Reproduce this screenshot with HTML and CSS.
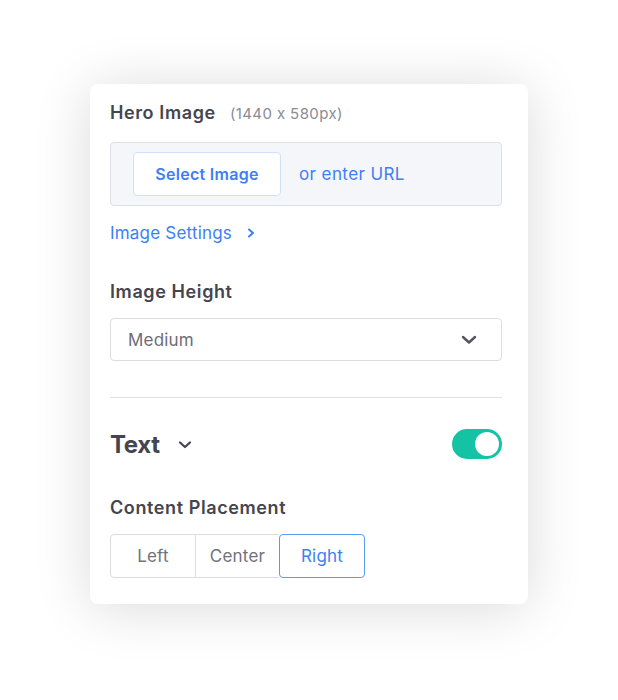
FILE: index.html
```html
<!DOCTYPE html>
<html lang="en">
<head>
    <meta charset="UTF-8">
    <meta name="viewport" content="width=device-width, initial-scale=1.0">
    <title>Hero settings</title>
    <link rel="stylesheet" href="styles.css">
</head>
<body>
<div class="page">
    <div class="panel">
        <div class="field-title">
            Hero Image <span class="hint">(1440 x 580px)</span>
        </div>

        <div class="dropzone">
            <button class="select-btn">Select Image</button>
            <span class="url-link">or enter URL</span>
        </div>

        <a class="settings-link" href="#">
            Image Settings
            <svg width="10" height="12" viewBox="0 0 10 12"><path d="M3 2.5l4 3.5-4 3.5" fill="none" stroke="currentColor" stroke-width="2" stroke-linecap="round" stroke-linejoin="round"/></svg>
        </a>

        <div class="field-title spaced">Image Height</div>
        <div class="dropdown">
            <span>Medium</span>
            <svg width="16" height="10" viewBox="0 0 16 10"><path d="M2 2l6 5.5L14 2" fill="none" stroke="currentColor" stroke-width="2.4" stroke-linecap="round" stroke-linejoin="round"/></svg>
        </div>

        <div class="divider"></div>

        <div class="section-head">
            <div class="section-name">
                Text
                <svg width="14" height="10" viewBox="0 0 14 10"><path d="M2 2.5l5 4.5 5-4.5" fill="none" stroke="currentColor" stroke-width="2.2" stroke-linecap="round" stroke-linejoin="round"/></svg>
            </div>
            <div class="toggle on"><div class="knob"></div></div>
        </div>

        <div class="field-title placement">Content Placement</div>
        <div class="segmented">
            <div class="seg">Left</div>
            <div class="seg">Center</div>
            <div class="seg active">Right</div>
        </div>
    </div>
</div>
</body>
</html>
```

FILE: styles.css
```css
body {
    margin: 0;
    background: #fff;
    font-family: Inter, "Noto Sans", sans-serif;
    font-feature-settings: "calt" 0;
    color: #45454f;
}
.page {
    padding: 84px 0 96px 90px;
}
.panel {
    width: 392px;
    height: 477px;
    padding: 17px 26px 26px 20px;
    background: #fff;
    border-radius: 8px;
    box-shadow: 0 4px 55px rgba(0, 0, 0, 0.15);
}
.field-title {
    font-size: 18px;
    font-weight: 600;
    line-height: 24px;
    letter-spacing: 0.6px;
}
.field-title.spaced {
    margin-top: 35px;
}
.field-title.placement {
    margin-top: 37px;
}
.hint {
    margin-left: 9px;
    font-size: 15px;
    font-weight: 400;
    color: #8b8b95;
    letter-spacing: 0.4px;
}
.dropzone {
    margin-top: 16px;
    box-sizing: border-box;
    height: 64px;
    padding: 9px 22px;
    display: flex;
    align-items: center;
    gap: 18px;
    background: #f4f6fa;
    border: 1px solid #dde0e7;
    border-radius: 4px;
}
.select-btn {
    width: 148px;
    height: 44px;
    background: #fff;
    border: 1px solid #cfe0fb;
    border-radius: 4px;
    font-family: inherit;
    font-size: 16px;
    font-weight: 600;
    color: #3d7ff5;
    letter-spacing: 0.3px;
    cursor: pointer;
}
.url-link {
    font-size: 17px;
    color: #3d7ff5;
    letter-spacing: 0.4px;
}
.settings-link {
    margin-top: 15px;
    display: flex;
    align-items: center;
    gap: 14px;
    line-height: 24px;
    font-size: 17px;
    color: #3d7ff5;
    text-decoration: none;
    letter-spacing: 0.2px;
}
.dropdown {
    margin-top: 14px;
    height: 43px;
    box-sizing: border-box;
    padding: 0 24px 0 17px;
    display: flex;
    align-items: center;
    justify-content: space-between;
    border: 1px solid #dcdce1;
    border-radius: 4px;
    font-size: 17px;
    letter-spacing: 0.2px;
    color: #6d6d77;
}
.dropdown svg {
    color: #55555f;
}
.divider {
    margin-top: 36px;
    height: 1px;
    background: #e1e1e6;
}
.section-head {
    margin-top: 31px;
    display: flex;
    align-items: center;
    justify-content: space-between;
    height: 30px;
}
.section-name {
    display: flex;
    align-items: center;
    gap: 18px;
    font-size: 24px;
    font-weight: 700;
    letter-spacing: -0.3px;
}
.section-name svg {
    margin-top: 2px;
}
.toggle {
    width: 50px;
    height: 30px;
    box-sizing: border-box;
    padding: 3px;
    border-radius: 15px;
    background: #d6d6dc;
    display: flex;
}
.toggle.on {
    background: #14c3a4;
    justify-content: flex-end;
}
.knob {
    width: 24px;
    height: 24px;
    border-radius: 50%;
    background: #fff;
}
.segmented {
    margin-top: 14px;
    display: flex;
}
.seg {
    height: 44px;
    box-sizing: border-box;
    display: flex;
    align-items: center;
    justify-content: center;
    border: 1px solid #dcdce0;
    font-size: 17px;
    letter-spacing: 0.2px;
    color: #72727c;
}
.seg:nth-child(1) {
    width: 86px;
    border-radius: 4px 0 0 4px;
}
.seg:nth-child(2) {
    width: 83px;
    border-left: none;
    border-right: none;
}
.seg:nth-child(3) {
    width: 86px;
    border-radius: 0 4px 4px 0;
}
.seg.active {
    border-color: #5b9af7;
    color: #3d7ff5;
    border-radius: 4px;
}
```
